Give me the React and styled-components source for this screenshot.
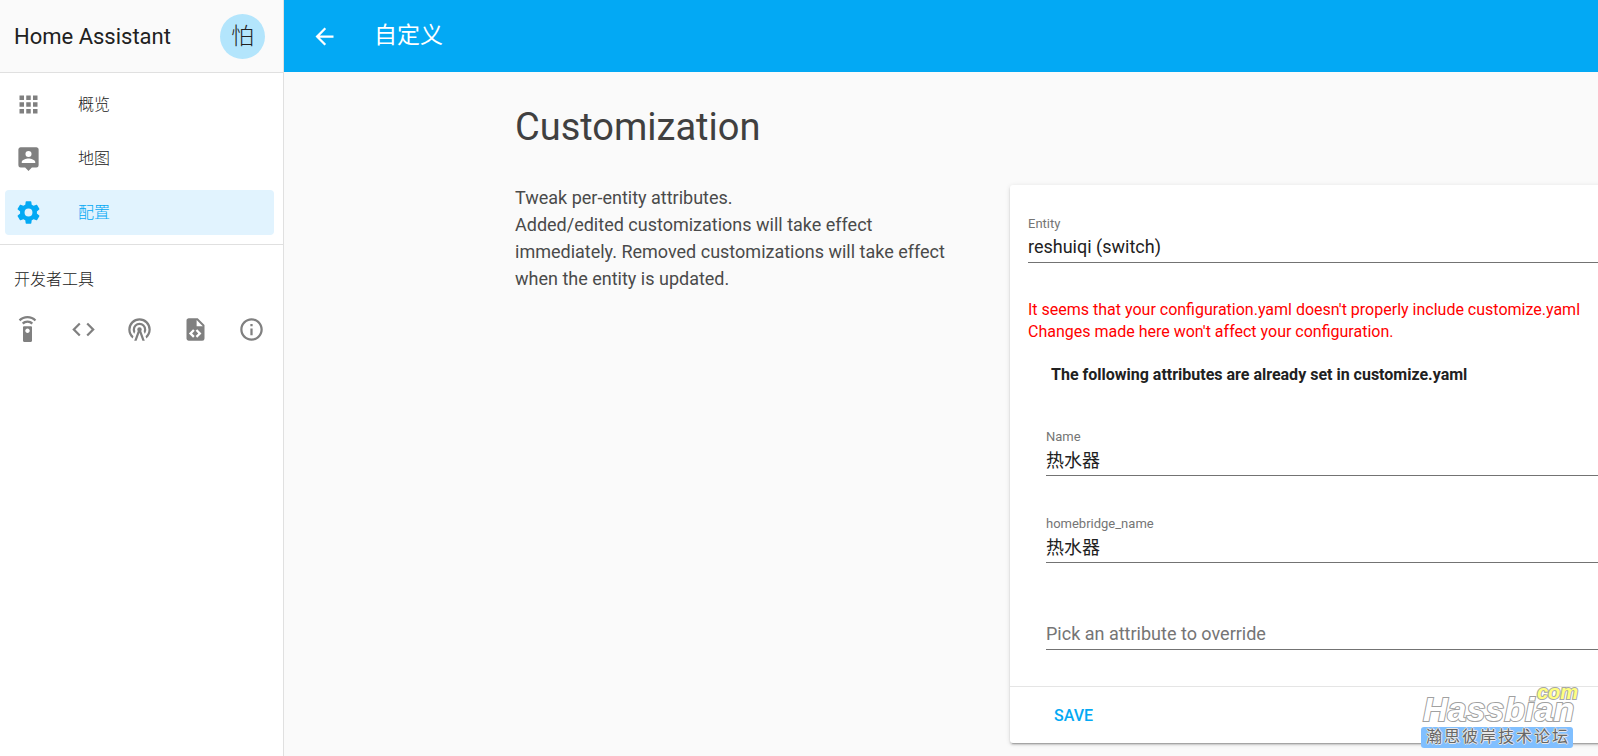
import React from "react";
import styled, { createGlobalStyle } from "styled-components";
import {
  MdApps,
  MdArrowBack,
  MdCode,
  MdInfoOutline,
  MdSettingsRemote
} from "react-icons/md";

const GlobalStyle = createGlobalStyle`
  * {
    box-sizing: border-box;
  }
  body {
    margin: 0;
    background: #fafafa;
    color: #212121;
    font-family: Roboto, "Noto Sans CJK SC", sans-serif;
    font-size: 16px;
    overflow: hidden;
  }
  input, button {
    font-family: inherit;
  }
`;

const Layout = styled.div`
  display: flex;
  min-height: 100vh;
  position: relative;
`;

const Sidebar = styled.aside`
  flex: 0 0 284px;
  background: #fff;
  border-right: 1px solid #e0e0e0;
`;

const SidebarHeader = styled.header`
  display: flex;
  align-items: center;
  justify-content: space-between;
  height: 73px;
  padding: 0 18px 0 14px;
  background: #fafafa;
  border-bottom: 1px solid #e0e0e0;
`;

const AppName = styled.span`
  font-size: 22px;
`;

const Avatar = styled.button`
  width: 45px;
  height: 45px;
  padding: 0;
  border: 0;
  border-radius: 50%;
  background: #b3e5fc;
  color: #212121;
  font-size: 23px;
  font-weight: 300;
  line-height: 45px;
`;

const Menu = styled.nav`
  display: flex;
  flex-direction: column;
  gap: 9px;
  padding: 9px 9px 9px 5px;
  border-bottom: 1px solid #e0e0e0;
`;

const MenuItem = styled.a`
  display: flex;
  align-items: center;
  gap: 36px;
  height: 45px;
  padding-left: 10px;
  border-radius: 4px;
  background: ${props => (props.$active ? "#e1f3fe" : "transparent")};
  color: ${props => (props.$active ? "#03a9f4" : "#212121")};
  font-weight: 300;
  text-decoration: none;

  svg {
    width: 27px;
    height: 27px;
    color: ${props => (props.$active ? "#03a9f4" : "#808080")};
  }
`;

const MenuText = styled.span`
  padding-bottom: 3px;
`;

const ToolsTitle = styled.h2`
  margin: 0;
  padding: 21px 14px 0;
  font-size: 16px;
  font-weight: 300;
  line-height: 27px;
`;

const Tools = styled.div`
  display: flex;
  justify-content: space-between;
  padding: 23px 18px 0 14px;
`;

const Tool = styled.a`
  display: flex;
  color: #808080;

  svg {
    width: 27px;
    height: 27px;
  }
`;

const Main = styled.main`
  flex: 1;
  min-width: 0;
  overflow: hidden;
`;

const Toolbar = styled.header`
  display: flex;
  align-items: center;
  gap: 36px;
  height: 72px;
  padding-left: 27px;
  background: #03a9f4;
  color: #fff;
`;

const BackButton = styled.button`
  display: flex;
  padding: 0;
  border: 0;
  background: none;
  color: inherit;

  svg {
    width: 27px;
    height: 27px;
  }
`;

const ToolbarTitle = styled.h1`
  margin: 0;
  font-size: 23px;
  font-weight: 400;
  line-height: 32px;
`;

const Content = styled.div`
  padding: 32px 0 0 231px;
`;

const Heading = styled.h2`
  margin: 0;
  color: #404040;
  font-size: 38px;
  font-weight: 400;
  line-height: 46px;
`;

const Section = styled.section`
  display: flex;
  gap: 45px;
  margin-top: 34px;
`;

const Intro = styled.p`
  flex: 0 0 450px;
  margin: 0;
  color: #4a4a4a;
  font-size: 18px;
  line-height: 27px;
`;

/* the card runs on past the right edge of the window */
const Card = styled.form`
  flex: 1;
  margin: 1px -18px 0 0;
  border-radius: 3px;
  background: #fff;
  box-shadow: 0 2px 2px rgba(0, 0, 0, 0.14), 0 1px 5px rgba(0, 0, 0, 0.12),
    0 3px 1px -2px rgba(0, 0, 0, 0.2);
`;

const CardBody = styled.div`
  padding: 27px 18px 36px;
`;

const Field = styled.div`
  display: flex;
  flex-direction: column;
  height: 51px;
`;

const FieldLabel = styled.label`
  height: 22px;
  color: #757575;
  font-size: 13px;
  line-height: 23px;
`;

const FieldInput = styled.input`
  height: 29px;
  margin-top: auto;
  padding: 0 0 4px;
  border: 0;
  border-bottom: 1px solid #737373;
  background: none;
  color: #212121;
  font-size: 18px;
  outline: none;

  &::placeholder {
    color: #757575;
    opacity: 1;
  }
`;

const Warning = styled.p`
  margin: 36px 0 0;
  color: #f00;
  font-size: 16px;
  line-height: 22px;
  white-space: nowrap;
`;

const Attributes = styled.div`
  display: flex;
  flex-direction: column;
  gap: 36px;
  padding-left: 18px;
`;

const AttributesTitle = styled.h3`
  margin: 0;
  padding: 21px 5px 3px;
  font-size: 16px;
  font-weight: 700;
  line-height: 22px;
`;

const CardActions = styled.div`
  padding: 14px 36px;
  border-top: 1px solid #e5e5e5;
`;

const SaveButton = styled.button`
  height: 28px;
  padding: 0 8px;
  border: 0;
  background: none;
  color: #03a9f4;
  font-size: 16px;
  font-weight: 500;
`;

const Watermark = styled.div`
  position: absolute;
  right: 25px;
  bottom: 8px;
  width: 152px;
  pointer-events: none;
`;

const WatermarkName = styled.div`
  padding-left: 2px;
  color: #fff;
  font: italic 700 34px/30px "Liberation Sans", sans-serif;
  -webkit-text-stroke: 2px #a0a0a0;
  paint-order: stroke fill;
`;

const WatermarkDomain = styled.div`
  position: absolute;
  top: -12px;
  right: -5px;
  color: #ffff80;
  font: italic 700 20px/20px "Liberation Sans", sans-serif;
  -webkit-text-stroke: 2px #a8a8a8;
  paint-order: stroke fill;
`;

const WatermarkTag = styled.div`
  display: flex;
  justify-content: space-between;
  height: 21px;
  margin-top: 3px;
  padding: 0 5px;
  border-radius: 3px;
  background: #80bfff;
  color: #666;
  font-size: 16px;
  line-height: 20px;
  text-shadow: 1px 0 #e8e8e8, -1px 0 #e8e8e8, 0 1px #e8e8e8, 0 -1px #e8e8e8;
`;

const Icon = ({ d }) => (
  <svg viewBox="0 0 24 24" fill="currentColor" aria-hidden="true">
    <path d={d} />
  </svg>
);

const MapIcon = () => (
  <Icon d="M18,16H6V15.1C6,13.1 10,12 12,12C14,12 18,13.1 18,15.1M12,5.3A2.7,2.7 0 0,1 14.7,8A2.7,2.7 0 0,1 12,10.7A2.7,2.7 0 0,1 9.3,8A2.7,2.7 0 0,1 12,5.3M19,2H5C3.89,2 3,2.9 3,4V18A2,2 0 0,0 5,20H9L12,23L15,20H19A2,2 0 0,0 21,18V4C21,2.89 20.1,2 19,2Z" />
);

const SettingsIcon = () => (
  <Icon d="M12,15.5A3.5,3.5 0 0,1 8.5,12A3.5,3.5 0 0,1 12,8.5A3.5,3.5 0 0,1 15.5,12A3.5,3.5 0 0,1 12,15.5M19.43,12.97C19.47,12.65 19.5,12.33 19.5,12C19.5,11.67 19.47,11.34 19.43,11L21.54,9.37C21.73,9.22 21.78,8.95 21.66,8.73L19.66,5.27C19.54,5.05 19.27,4.96 19.05,5.05L16.56,6.05C16.04,5.66 15.5,5.32 14.87,5.07L14.5,2.42C14.46,2.18 14.25,2 14,2H10C9.75,2 9.54,2.18 9.5,2.42L9.13,5.07C8.5,5.32 7.96,5.66 7.44,6.05L4.95,5.05C4.73,4.96 4.46,5.05 4.34,5.27L2.34,8.73C2.21,8.95 2.27,9.22 2.46,9.37L4.57,11C4.53,11.34 4.5,11.67 4.5,12C4.5,12.33 4.53,12.65 4.57,12.97L2.46,14.63C2.27,14.78 2.21,15.05 2.34,15.27L4.34,18.73C4.46,18.95 4.73,19.03 4.95,18.95L7.44,17.94C7.96,18.34 8.5,18.68 9.13,18.93L9.5,21.58C9.54,21.82 9.75,22 10,22H14C14.25,22 14.46,21.82 14.5,21.58L14.87,18.93C15.5,18.67 16.04,18.34 16.56,17.94L19.05,18.95C19.27,19.03 19.54,18.95 19.66,18.73L21.66,15.27C21.78,15.05 21.73,14.78 21.54,14.63L19.43,12.97Z" />
);

const TowerIcon = () => (
  <Icon d="M12,10A2,2 0 0,1 14,12C14,12.5 13.82,12.94 13.53,13.29L16.7,22H14.57L12,14.93L9.43,22H7.3L10.47,13.29C10.18,12.94 10,12.5 10,12A2,2 0 0,1 12,10M12,8A4,4 0 0,0 8,12C8,12.5 8.1,13 8.28,13.46L7.4,15.86C6.53,14.81 6,13.47 6,12A6,6 0 0,1 12,6A6,6 0 0,1 18,12C18,13.47 17.47,14.81 16.6,15.86L15.72,13.46C15.9,13 16,12.5 16,12A4,4 0 0,0 12,8M12,4A8,8 0 0,0 4,12C4,14.36 5,16.5 6.64,17.94L5.92,19.94C3.54,18.11 2,15.23 2,12A10,10 0 0,1 12,2A10,10 0 0,1 22,12C22,15.23 20.46,18.11 18.08,19.94L17.36,17.94C19,16.5 20,14.36 20,12A8,8 0 0,0 12,4Z" />
);

const TemplateIcon = () => (
  <Icon d="M13,9H18.5L13,3.5V9M6,2H14L20,8V20A2,2 0 0,1 18,22H6C4.89,22 4,21.1 4,20V4C4,2.89 4.89,2 6,2M6.12,15.5L9.86,19.24L11.28,17.83L8.95,15.5L11.28,13.17L9.86,11.76L6.12,15.5M17.28,15.5L13.54,11.76L12.12,13.17L14.45,15.5L12.12,17.83L13.54,19.24L17.28,15.5Z" />
);

const menu = [
  { id: "states", title: "概览", icon: <MdApps /> },
  { id: "map", title: "地图", icon: <MapIcon /> },
  { id: "config", title: "配置", icon: <SettingsIcon /> }
];

const tools = [
  { id: "service", icon: <MdSettingsRemote /> },
  { id: "state", icon: <MdCode /> },
  { id: "event", icon: <TowerIcon /> },
  { id: "template", icon: <TemplateIcon /> },
  { id: "info", icon: <MdInfoOutline /> }
];

const attributes = [
  { id: "name", label: "Name", value: "热水器" },
  { id: "homebridge_name", label: "homebridge_name", value: "热水器" }
];

const App = () => (
  <>
    <GlobalStyle />
    <Layout>
      <Sidebar>
        <SidebarHeader>
          <AppName>Home Assistant</AppName>
          <Avatar type="button">怕</Avatar>
        </SidebarHeader>
        <Menu>
          {menu.map(item => (
            <MenuItem
              key={item.id}
              href={`#${item.id}`}
              $active={item.id === "config"}
            >
              {item.icon}
              <MenuText>{item.title}</MenuText>
            </MenuItem>
          ))}
        </Menu>
        <ToolsTitle>开发者工具</ToolsTitle>
        <Tools>
          {tools.map(tool => (
            <Tool key={tool.id} href={`#dev-${tool.id}`} aria-label={tool.id}>
              {tool.icon}
            </Tool>
          ))}
        </Tools>
      </Sidebar>
      <Main>
        <Toolbar>
          <BackButton type="button" aria-label="Back">
            <MdArrowBack />
          </BackButton>
          <ToolbarTitle>自定义</ToolbarTitle>
        </Toolbar>
        <Content>
          <Heading>Customization</Heading>
          <Section>
            <Intro>
              Tweak per-entity attributes.
              <br />
              Added/edited customizations will take effect immediately. Removed
              customizations will take effect when the entity is updated.
            </Intro>
            <Card onSubmit={e => e.preventDefault()}>
              <CardBody>
                <Field>
                  <FieldLabel htmlFor="entity">Entity</FieldLabel>
                  <FieldInput id="entity" defaultValue="reshuiqi (switch)" />
                </Field>
                <Warning>
                  It seems that your configuration.yaml doesn't properly include
                  customize.yaml
                  <br />
                  Changes made here won't affect your configuration.
                </Warning>
                <Attributes>
                  <AttributesTitle>
                    The following attributes are already set in customize.yaml
                  </AttributesTitle>
                  {attributes.map(attr => (
                    <Field key={attr.id}>
                      <FieldLabel htmlFor={attr.id}>{attr.label}</FieldLabel>
                      <FieldInput id={attr.id} defaultValue={attr.value} />
                    </Field>
                  ))}
                  <Field>
                    <FieldInput
                      aria-label="Pick an attribute to override"
                      placeholder="Pick an attribute to override"
                    />
                  </Field>
                </Attributes>
              </CardBody>
              <CardActions>
                <SaveButton type="submit">SAVE</SaveButton>
              </CardActions>
            </Card>
          </Section>
        </Content>
      </Main>
      <Watermark>
        <WatermarkName>Hassbian</WatermarkName>
        <WatermarkDomain>com</WatermarkDomain>
        <WatermarkTag>
          {[..."瀚思彼岸技术论坛"].map(char => (
            <span key={char}>{char}</span>
          ))}
        </WatermarkTag>
      </Watermark>
    </Layout>
  </>
);

export default App;
